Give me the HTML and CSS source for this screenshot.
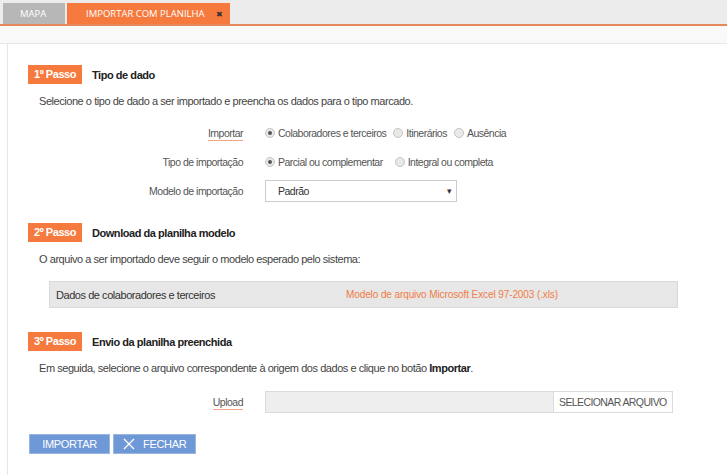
FILE: index.html
```html
<!DOCTYPE html>
<html lang="pt-BR">
<head>
    <meta charset="UTF-8">
    <title>Importar com planilha</title>
    <link rel="stylesheet" href="styles.css">
</head>
<body>
    <div class="tabbar">
        <div class="tab">MAPA</div>
        <div class="tab active"><span>IMPORTAR COM PLANILHA</span><span class="tab-close">&#x2716;</span></div>
    </div>
    <div class="band"></div>
    <div class="panel">
        <div class="step">
            <span class="badge">1º Passo</span>
            <span class="step-title">Tipo de dado</span>
        </div>
        <p class="desc">Selecione o tipo de dado a ser importado e preencha os dados para o tipo marcado.</p>
        <div class="form-row first">
            <div class="label"><span class="req">Importar</span></div>
            <div class="field">
                <label class="radio checked"><span class="dot"></span>Colaboradores e terceiros</label>
                <label class="radio"><span class="dot"></span>Itinerários</label>
                <label class="radio"><span class="dot"></span>Ausência</label>
            </div>
        </div>
        <div class="form-row">
            <div class="label">Tipo de importação</div>
            <div class="field">
                <label class="radio checked wide"><span class="dot"></span>Parcial ou complementar</label>
                <label class="radio"><span class="dot"></span>Integral ou completa</label>
            </div>
        </div>
        <div class="form-row">
            <div class="label">Modelo de importação</div>
            <div class="field">
                <div class="select">Padrão <span class="arrow">&#9662;</span></div>
            </div>
        </div>

        <div class="step step-gap">
            <span class="badge">2º Passo</span>
            <span class="step-title">Download da planilha modelo</span>
        </div>
        <p class="desc">O arquivo a ser importado deve seguir o modelo esperado pelo sistema:</p>
        <div class="model-row">
            <span class="model-name">Dados de colaboradores e terceiros</span>
            <a class="model-link">Modelo de arquivo Microsoft Excel 97-2003 (.xls)</a>
        </div>

        <div class="step step-gap3">
            <span class="badge">3º Passo</span>
            <span class="step-title">Envio da planilha preenchida</span>
        </div>
        <p class="desc">Em seguida, selecione o arquivo correspondente à origem dos dados e clique no botão <b>Importar</b>.</p>
        <div class="form-row upload-row">
            <div class="label"><span class="req">Upload</span></div>
            <div class="field">
                <div class="file-input"></div>
                <div class="file-btn">SELECIONAR ARQUIVO</div>
            </div>
        </div>

        <div class="actions">
            <button class="btn">IMPORTAR</button>
            <button class="btn btn-close">
                <svg width="12" height="12" viewBox="0 0 12 12"><path d="M1 1 L11 11 M11 1 L1 11" stroke="#fff" stroke-width="1.3" fill="none"/></svg>
                FECHAR
            </button>
        </div>
    </div>
</body>
</html>
```

FILE: styles.css
```css
body {
    margin: 0;
    font-family: "Liberation Sans", Arial, sans-serif;
    font-size: 11px;
    letter-spacing: -0.45px;
    color: #444;
    background: #fff;
    height: 475px;
    overflow: hidden;
}
.tabbar {
    background: #ececec;
    height: 24px;
    padding-left: 3px;
    display: flex;
    align-items: flex-end;
    gap: 2px;
    border-bottom: 2px solid #e8875c;
    letter-spacing: 0;
}
.tab {
    height: 21px;
    line-height: 21px;
    padding: 0 17px;
    background: #b7b7b7;
    color: #fff;
    font-family: "Open Sans", sans-serif;
    font-size: 9.5px;
    width: 28px;
    white-space: nowrap;
}
.tab.active {
    background: #f6793e;
    width: 137px;
    padding: 0 7px 0 19px;
    display: flex;
    justify-content: space-between;
}
.tab-close {
    color: #333;
    font-size: 8px;
}
.band {
    background: #f9f9f9;
    height: 17px;
    border-bottom: 1px solid #e9e9e9;
}
.panel {
    margin-left: 7px;
    border-left: 1px solid #e6e6e6;
    padding: 21px 0 0 20px;
    height: 420px;
}
.step {
    display: flex;
    align-items: center;
}
.step-gap {
    margin-top: 21px;
}
.step-gap3 {
    margin-top: 24px;
}
.badge {
    background: #f6793e;
    color: #fff;
    font-weight: bold;
    height: 19px;
    line-height: 19px;
    width: 54px;
    text-align: center;
    font-size: 11px;
}
.step-title {
    margin-left: 10px;
    font-weight: bold;
    color: #222;
}
.desc {
    margin: 11px 0 0 11px;
    line-height: 13px;
    color: #444;
}
.desc b {
    color: #222;
}
.form-row {
    display: flex;
    align-items: center;
    height: 22px;
    margin-top: 7px;
    font-size: 10.5px;
    letter-spacing: -0.5px;
}
.form-row.first {
    margin-top: 14px;
}
.label {
    width: 215px;
    text-align: right;
    color: #555;
    margin-right: 22px;
}
.req {
    border-bottom: 1px solid #f2a48a;
    padding-bottom: 1px;
}
.field {
    display: flex;
    align-items: center;
}
.radio {
    display: flex;
    align-items: center;
    margin-right: 7px;
    color: #555;
}
.radio.wide {
    margin-right: 12px;
}
.dot {
    width: 8px;
    height: 8px;
    border-radius: 50%;
    border: 1px solid #c4c4c4;
    background: #e9e9e9;
    margin-right: 3px;
    position: relative;
}
.radio.checked .dot::after {
    content: '';
    position: absolute;
    left: 2px;
    top: 2px;
    width: 4px;
    height: 4px;
    border-radius: 50%;
    background: #555;
}
.select {
    width: 178px;
    height: 20px;
    line-height: 20px;
    border: 1px solid #ccc;
    padding-left: 12px;
    color: #333;
    position: relative;
}
.arrow {
    position: absolute;
    right: 5px;
    top: 0;
    font-size: 9px;
}
.model-row {
    margin: 15px 0 0 21px;
    width: 627px;
    height: 25px;
    background: #e7e7e7;
    border: 1px solid #d9d9d9;
    display: flex;
    align-items: center;
}
.model-name {
    width: 290px;
    padding-left: 6px;
    color: #333;
}
.model-link {
    color: #f07c45;
    font-size: 10px;
    letter-spacing: -0.1px;
}
.upload-row {
    margin-top: 16px;
}
.file-input {
    width: 287px;
    height: 20px;
    background: #eeeeee;
    border: 1px solid #dcdcdc;
}
.file-btn {
    height: 20px;
    line-height: 20px;
    border: 1px solid #dcdcdc;
    border-left: none;
    padding: 0 5px;
    color: #555;
    background: #fff;
    font-size: 10.5px;
    letter-spacing: -0.6px;
}
.actions {
    margin: 21px 0 0 1px;
    display: flex;
    gap: 3px;
}
.btn {
    height: 20px;
    width: 81px;
    padding: 0;
    border: 1px solid #9ab7e2;
    background: #6f98d6;
    color: #fff;
    font-family: "Liberation Sans", Arial, sans-serif;
    font-size: 11px;
    letter-spacing: -0.3px;
    display: flex;
    align-items: center;
    justify-content: center;
}
.btn-close {
    width: 83px;
    gap: 8px;
    justify-content: flex-start;
    padding-left: 9px;
}
```
